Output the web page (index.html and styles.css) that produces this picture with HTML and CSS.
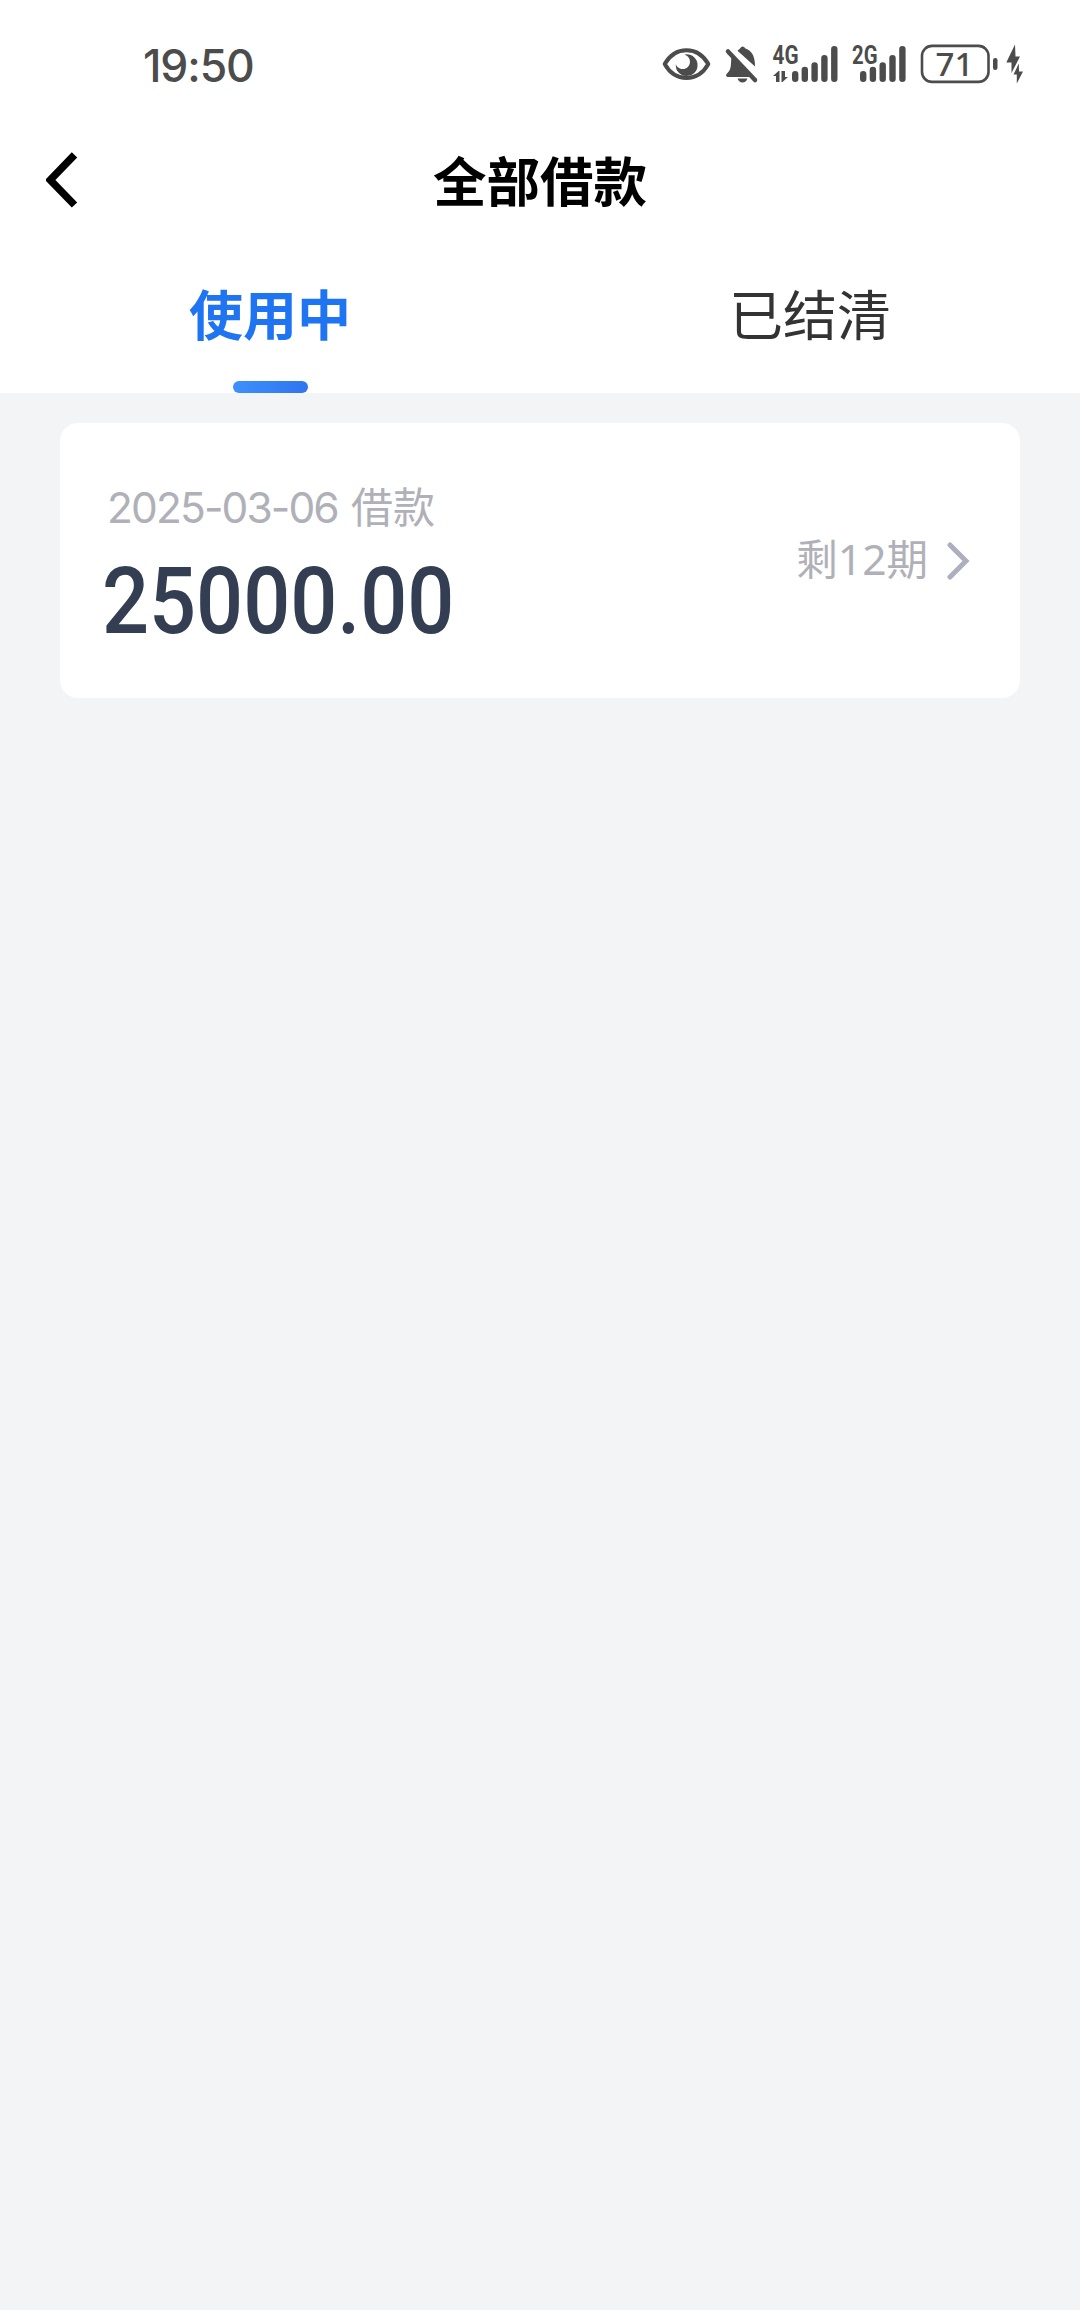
FILE: index.html
```
<!DOCTYPE html>
<html lang="zh-CN">

<head>
    <meta charset="UTF-8">
    <meta name="viewport" content="width=device-width, initial-scale=1.0">
    <title>全部借款</title>
    <link rel="stylesheet" href="styles.css">
</head>

<body>
    <div class="statusbar">
        <span class="time">19:50</span>
        <svg class="status-icons" width="370" height="60" viewBox="655 34 370 60">
            <!-- eye -->
            <path class="line" d="M664.7 64C675 45.500 698 45.500 708.300 64C698 82.500 675 82.500 664.700 64Z" />
            <path d="M686.500 54.300A10.900 10.900 0 1 1 675.800 64.200A7.300 7.300 0 1 0 684.600 54.700Z" />
            <!-- bell off -->
            <path d="M731.500 55L752 77H727.500Q724.500 75.500 727.500 73Q731 70 731 63Z" />
            <path d="M737.500 50.800Q739 49.500 740 48.500Q742.500 44.500 745.500 48.500Q755 51.500 755 66.500Z" />
            <path class="strike" d="M728 51.500L755 80" />
            <path d="M737.500 78.500H747.500Q746 82.500 742.500 82.500Q739 82.500 737.500 78.500Z" />
            <!-- 4G -->
            <text class="net" x="772.500" y="64" textLength="26" lengthAdjust="spacingAndGlyphs">4G</text>
            <path d="M773 76L778.500 71H779.500V82H776V76Z" />
            <path d="M781.500 71H785V77H788L782.500 82H781.500Z" />
            <g class="bars">
                <path d="M795.200 74.200V78.800M804.800 70V78.800M814.600 65.500V78.800M824.400 58.200V78.800M834.300 49.200V78.800" />
            </g>
            <!-- 2G -->
            <text class="net" x="852" y="64" textLength="25.500" lengthAdjust="spacingAndGlyphs">2G</text>
            <g class="bars">
                <path d="M863.200 74.200V78.800M872.900 70V78.800M882.700 65.500V78.800M892.500 58.200V78.800M902.400 49.200V78.800" />
            </g>
            <!-- battery -->
            <rect class="cell" x="922" y="45.900" width="66.500" height="36" rx="10" />
            <rect x="993" y="58" width="4.500" height="12" rx="2.200" />
            <text class="level" x="954.500" y="75.700" text-anchor="middle">71</text>
            <path d="M1015 44.500L1006.300 62.500H1011.500V73L1020 56.500H1015.500Z" />
            <path d="M1018.800 63.500L1013.500 74.500H1016.800V83.500L1023 71.500H1019Z" />
        </svg>
    </div>

    <div class="navbar">
        <svg class="back" width="36" height="60" viewBox="0 0 36 60">
            <path d="M28.500 4.800L4.300 30L28.500 55" />
        </svg>
        <h1 class="title">全部借款</h1>
    </div>

    <div class="tabs">
        <div class="tab active">使用中</div>
        <div class="tab">已结清</div>
    </div>

    <div class="list">
        <div class="card">
            <div class="loan">
                <div class="date">2025-03-06 <span class="word">借款</span></div>
                <div class="amount">25000.00</div>
            </div>
            <div class="rest">
                <span class="periods">剩<span class="num">12</span>期</span>
                <svg class="arrow" width="24" height="40" viewBox="0 0 24 40">
                    <path d="M3 4L19 20L3 36" />
                </svg>
            </div>
        </div>
    </div>
</body>

</html>
```

FILE: styles.css
```
* {
    box-sizing: border-box;
}

body {
    margin: 0;
    min-height: 2310px;
    background-color: #f2f4f6;
    font-family: "Inter", "Noto Sans CJK SC", sans-serif;
}

svg {
    display: block;
}

.statusbar {
    display: flex;
    justify-content: space-between;
    align-items: center;
    height: 130px;
    padding: 0 55px 2px 143px;
    background-color: white;
}

.time {
    padding-top: 4px;
    font-size: 44.500px;
    font-weight: 500;
    line-height: 60px;
    letter-spacing: -1.100px;
    color: #4c4c4c;
}

.status-icons {
    fill: #4c4c4c;
}

.status-icons .line {
    fill: none;
    stroke: #4c4c4c;
    stroke-width: 4;
    stroke-linejoin: round;
}

.status-icons .strike {
    stroke: #4c4c4c;
    stroke-width: 4.500;
    stroke-linecap: round;
}

.status-icons .net {
    font-family: "Roboto", sans-serif;
    font-size: 25px;
    font-weight: 700;
}

.status-icons .level {
    font-family: "Noto Sans", sans-serif;
    font-size: 33px;
    font-weight: 500;
}

.bars {
    fill: none;
    stroke: #4c4c4c;
    stroke-width: 6.400;
    stroke-linecap: round;
}

.cell {
    fill: none;
    stroke: #4c4c4c;
    stroke-width: 2.600;
}

.navbar {
    display: grid;
    grid-template-columns: 120px 1fr 120px;
    align-items: center;
    height: 100px;
    background-color: white;
}

.back {
    margin-left: 46px;
    fill: none;
    stroke: black;
    stroke-width: 7.500;
}

.title {
    margin: 0;
    padding-top: 5px;
    font-size: 53.500px;
    font-weight: 700;
    line-height: 80px;
    text-align: center;
    color: black;
}

.tabs {
    display: flex;
    height: 163px;
    background-color: white;
}

.tab {
    display: flex;
    flex: 1;
    flex-direction: column;
    align-items: center;
    justify-content: space-between;
    padding-top: 47px;
    font-size: 54px;
    line-height: 80px;
    color: #333;
}

.tab.active {
    font-weight: 700;
    color: #1f74f2;
}

.tab.active::after {
    content: "";
    width: 75px;
    height: 12px;
    border-radius: 6px;
    background: linear-gradient(100deg, #3e90fd, #2f74f0);
}

.list {
    padding: 30px 60px;
}

.card {
    display: flex;
    justify-content: space-between;
    height: 275px;
    padding: 55px 49px 0 42px;
    border-radius: 18px;
    background-color: white;
}

.date {
    padding-left: 5px;
    font-size: 42.500px;
    line-height: 60px;
    letter-spacing: -1.900px;
    color: #b0b1b8;
}

.word {
    margin-left: 3px;
    font-size: 42px;
    letter-spacing: 0;
}

.amount {
    margin-top: 14px;
    font-family: "Roboto", sans-serif;
    font-size: 92px;
    font-weight: 500;
    line-height: 100px;
    transform: scaleX(0.9);
    transform-origin: left;
    color: #343e52;
}

.rest {
    display: flex;
    align-items: center;
    gap: 19px;
    height: 60px;
    margin-top: 53px;
    font-size: 41.500px;
    line-height: 60px;
    color: #b0b1b8;
}

.periods {
    padding-bottom: 4px;
}

.num {
    font-family: "Noto Sans", sans-serif;
    font-size: 42.500px;
}

.arrow {
    fill: none;
    stroke: #adafbe;
    stroke-width: 5;
    stroke-linecap: round;
}
```
